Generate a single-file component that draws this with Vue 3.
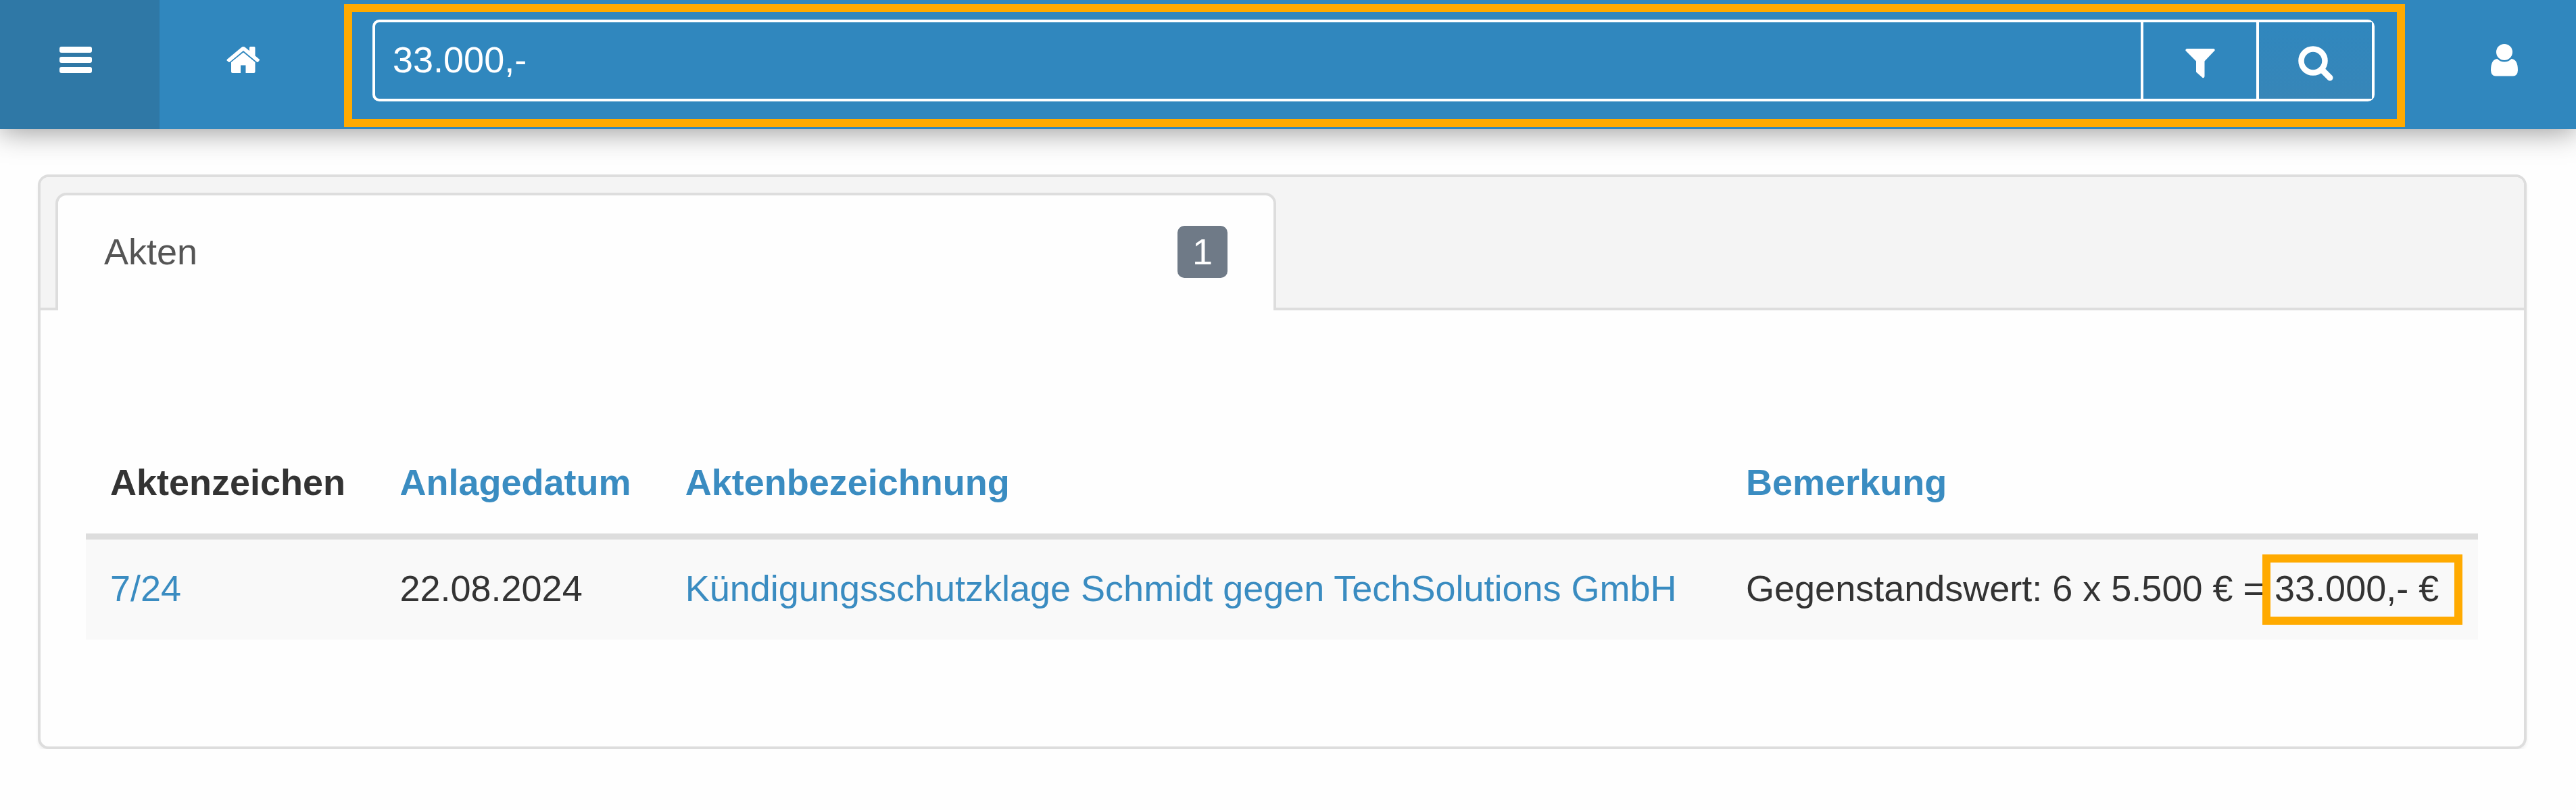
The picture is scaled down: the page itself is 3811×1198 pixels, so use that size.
<script setup>
import { ref } from 'vue'

const query = ref('33.000,-')

const tabs = [{ id: 'akten', label: 'Akten', count: 1 }]
const activeTab = ref('akten')

const columns = [
  { key: 'zeichen', label: 'Aktenzeichen', sortable: false },
  { key: 'datum', label: 'Anlagedatum', sortable: true },
  { key: 'bezeichnung', label: 'Aktenbezeichnung', sortable: true },
  { key: 'bemerkung', label: 'Bemerkung', sortable: true }
]

const akten = [
  {
    zeichen: '7/24',
    datum: '22.08.2024',
    bezeichnung: 'Kündigungsschutzklage Schmidt gegen TechSolutions GmbH',
    bemerkung: 'Gegenstandswert: 6 x 5.500 € =',
    treffer: '33.000,- €'
  }
]
</script>

<template>
  <div class="page">
    <header class="navbar">
      <button class="nav-btn menu" type="button" aria-label="Menü">
        <svg width="48" height="39" viewBox="0 0 48 39">
          <rect width="48" height="9" rx="3" />
          <rect y="15" width="48" height="9" rx="3" />
          <rect y="30" width="48" height="9" rx="3" />
        </svg>
      </button>
      <a class="nav-btn home" href="#" aria-label="Startseite">
        <svg width="50" height="40" viewBox="0 0 50 40">
          <path d="M25 8.500 42.500 23V37q0 2-2 2H28.500V27.500H21V39H9q-2 0-2-2V23Z" />
          <path d="M22 1.300Q25-1.200 28 1.300L34 6.300V1.500Q34 0 35.500 0H41Q42.500 0 42.500 1.500V13.500L48.500 18.500Q49.500 19.500 48.600 20.600L47 22.500Q46 23.500 44.800 22.600L25 6 5.200 22.600Q4 23.500 3 22.500L.6 20.600Q.2 19.300 1.300 18.400Z" />
        </svg>
      </a>

      <form class="search" role="search" @submit.prevent>
        <div class="search-group">
          <input v-model="query" type="text" aria-label="Suche" />
          <button type="button" aria-label="Filter">
            <svg width="44" height="44" viewBox="0 0 44 44">
              <path d="M2 0H42Q44 .5 43.700 2.500L28.500 18.500V41Q28 43.800 25.500 43L16 34.500V18.500L.5 3Q-.3 1 2 0Z" />
            </svg>
          </button>
          <button class="submit" type="submit" aria-label="Suchen">
            <svg width="52" height="52" viewBox="0 0 52 52">
              <circle cx="22" cy="22" r="17.500" fill="none" stroke="#fff" stroke-width="8.500" />
              <path d="M36 36 47 47" stroke="#fff" stroke-width="9" stroke-linecap="round" />
            </svg>
          </button>
        </div>
      </form>

      <button class="nav-btn user" type="button" aria-label="Benutzer">
        <svg width="40" height="48" viewBox="0 0 40 48">
          <path d="M9.500 22Q14 26.500 20 26.500T30.500 22Q40 23 40 39 39.500 47.500 33 47.500H7Q.5 47.500 0 39 0 23 9.500 22Z" />
          <circle cx="20" cy="12" r="12" />
        </svg>
      </button>
    </header>

    <main class="panel">
      <nav class="tabs">
        <button
          v-for="tab in tabs"
          :key="tab.id"
          class="tab"
          :class="{ active: tab.id === activeTab }"
          type="button"
          @click="activeTab = tab.id"
        >
          <span>{{ tab.label }}</span>
          <span class="badge">{{ tab.count }}</span>
        </button>
      </nav>

      <div class="panel-body">
        <table>
          <thead>
            <tr>
              <th v-for="col in columns" :key="col.key">
                <a v-if="col.sortable" href="#">{{ col.label }}</a>
                <template v-else>{{ col.label }}</template>
              </th>
            </tr>
          </thead>
          <tbody>
            <tr v-for="akte in akten" :key="akte.zeichen">
              <td><a href="#">{{ akte.zeichen }}</a></td>
              <td>{{ akte.datum }}</td>
              <td><a href="#">{{ akte.bezeichnung }}</a></td>
              <td>{{ akte.bemerkung }} <span class="hit">{{ akte.treffer }}</span></td>
            </tr>
          </tbody>
        </table>
      </div>
    </main>
  </div>
</template>

<style>
body {
  margin: 0;
  background: #fefefe;
}
</style>

<style scoped>
.page {
  font-family: 'Liberation Sans', Arial, sans-serif;
  font-size: 54px;
  line-height: 80px;
  color: #333;
}

a {
  color: #3a8cc1;
  text-decoration: none;
}

button,
input {
  box-sizing: border-box;
  margin: 0;
  border: 0;
  background: none;
  font: inherit;
  color: inherit;
}

svg {
  display: block;
  fill: #fff;
}

/* top bar */
.navbar {
  display: flex;
  height: 191px;
  background: #3087be;
  box-shadow: 0 4px 40px rgba(0, 0, 0, 0.4);
}

.nav-btn {
  box-sizing: border-box;
  display: flex;
  justify-content: center;
  height: 100%;
  padding: 69px 0 0;
}

.menu {
  width: 236px;
  padding-right: 12px;
  background: #2f78a6;
}

.home {
  width: 247px;
}

.user {
  width: 253px;
  padding-top: 65px;
  padding-left: 40px;
}

.search {
  box-sizing: border-box;
  flex: 1;
  height: 182px;
  margin: 6px 0 0 26px;
  padding: 11px 33px 0 30px;
  border: 12px solid #ffaa00;
}

.search-group {
  box-sizing: border-box;
  display: flex;
  height: 121px;
  border: 4px solid #fff;
  border-radius: 10px;
}

.search-group input {
  flex: 1;
  min-width: 0;
  padding: 0 26px 4px;
  color: #fff;
  outline: none;
}

.search-group button {
  display: flex;
  align-items: center;
  justify-content: center;
  width: 171px;
  padding: 8px 0 0;
  border-left: 4px solid #fff;
}

.search-group .submit {
  background: linear-gradient(#3087be, #3786b8);
}

/* result panel */
.panel {
  margin: 67px 73px 0 56px;
  border: 4px solid #ddd;
  border-radius: 16px;
  background: #fefefe;
  box-shadow: 0 4px 4px rgba(0, 0, 0, 0.05);
}

.tabs {
  display: flex;
  padding: 23px 22px 0;
  border-bottom: 4px solid #ddd;
  border-radius: 12px 12px 0 0;
  background: #f4f4f4;
}

.tab {
  display: flex;
  align-items: center;
  justify-content: space-between;
  width: 1806px;
  max-width: 100%;
  height: 174px;
  margin-bottom: -4px;
  padding: 0 68px 4px;
  border: 4px solid #ddd;
  border-bottom: 0;
  border-radius: 16px 16px 0 0;
  color: #555;
}

.tab.active {
  background: #fefefe;
}

.badge {
  padding: 0 22px;
  border-radius: 10px;
  background: #6f7a87;
  line-height: 77px;
  color: #fff;
}

.panel-body {
  padding: 182px 68px 158px 67px;
}

table {
  width: 100%;
  border-collapse: collapse;
}

th,
td {
  padding: 32px 36px 36px;
  text-align: left;
  white-space: nowrap;
}

th {
  border-bottom: 9px solid #ddd;
}

tbody tr {
  background: #f9f9f9;
}

.hit {
  position: relative;
}

/* frame around the matched amount, drawn over the cell text */
.hit::after {
  content: '';
  position: absolute;
  inset: -20px -35px -24px -18px;
  border: 12px solid #ffaa00;
}
</style>
